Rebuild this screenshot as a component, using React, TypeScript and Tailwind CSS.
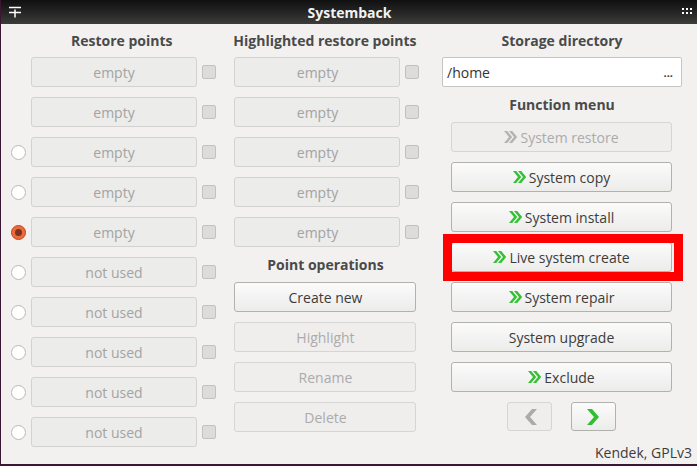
const font = { fontFamily: '"Open Sans", "Noto Sans", sans-serif' };

function Arrows({ muted = false }: { muted?: boolean }) {
    const c = muted ? '#b3b3b3' : '#35c135';
    return (
        <svg width="13" height="12" viewBox="0 0 13 12" className="mr-[3px] shrink-0">
            <path d="M0 0h3.2l5 6-5 6H0l5-6z" fill={c} />
            <path d="M5 0h3.2l5 6-5 6H5l5-6z" fill={c} />
        </svg>
    );
}

function Field({ text }: { text: string }) {
    return (
        <div className="w-[166px] h-[30px] rounded-[3px] border border-[#d3d2d0] bg-[#ececeb] flex items-center justify-center text-[14px] text-[#a3a3a3]">
            {text}
        </div>
    );
}

function Check() {
    return <div className="w-[14px] h-[14px] rounded-[2px] border border-[#c2c1bf] bg-[#dcdcdb]" />;
}

function Radio({ on = false }: { on?: boolean }) {
    if (on) {
        return (
            <div className="w-[15px] h-[15px] rounded-full border border-[#c0461a] bg-[#ed6a3c] flex items-center justify-center">
                <div className="w-[7px] h-[7px] rounded-full bg-[#7a3320]" />
            </div>
        );
    }
    return <div className="w-[15px] h-[15px] rounded-full border border-[#b9b8b6] bg-white" />;
}

function Btn({ label, w, arrows, disabled }: { label: string; w: string; arrows?: boolean; disabled?: boolean }) {
    return (
        <div
            className={`${w} h-[30px] rounded-[3px] border flex items-center justify-center text-[14px] ${disabled
                ? 'border-[#d6d5d3] bg-[#efeeed] text-[#ababab]'
                : 'border-[#b3b1ae] bg-gradient-to-b from-[#fbfbfb] to-[#ececeb] text-[#3c3c3c]'
                }`}
        >
            {arrows && <Arrows muted={disabled} />}
            {label}
        </div>
    );
}

const restoreRows = ['empty', 'empty', 'empty', 'empty', 'empty', 'not used', 'not used', 'not used', 'not used', 'not used'];

export default function App() {
    return (
        <div style={font} className="w-[697px] h-[466px] bg-[#f2f1f0] flex flex-col border-l border-b-2 border-[#3a1633] overflow-hidden">
            {/* title bar */}
            <div className="h-[24px] shrink-0 bg-gradient-to-b from-[#101010] to-[#3c3c3b] flex items-center justify-between pl-[7px] pr-[4px]">
                <svg width="14" height="12" viewBox="0 0 14 12">
                    <path d="M1 1.5h12M1 6.5h12M7 3.5v8" stroke="#ffffff" strokeWidth="1.5" />
                </svg>
                <span className="text-[14px] font-bold text-[#f2f2f2] -ml-[4px]">Systemback</span>
                <svg width="12" height="10" viewBox="0 0 12 10">
                    {[0, 4, 8].map((x) =>
                        [1, 5].map((y) => <rect key={`${x}-${y}`} x={x + 1} y={y} width="2" height="2" fill="#ffffff" />)
                    )}
                </svg>
            </div>

            <div className="flex flex-1">
                {/* restore points */}
                <div className="w-[219px] flex flex-col">
                    <div className="h-[33px] flex items-center justify-end pr-[47px] text-[14px] font-bold text-[#4a4a4a]">
                        Restore points
                    </div>
                    <div className="flex flex-col gap-[10px]">
                        {restoreRows.map((t, i) => (
                            <div key={i} className="h-[30px] flex items-center">
                                <div className="w-[30px] flex justify-center pl-[7px] pr-[3px]">
                                    {i >= 2 && <Radio on={i === 4} />}
                                </div>
                                <Field text={t} />
                                <div className="ml-[5px]"><Check /></div>
                            </div>
                        ))}
                    </div>
                </div>

                {/* highlighted */}
                <div className="w-[212px] flex flex-col pl-[15px]">
                    <div className="h-[33px] w-[185px] flex items-center justify-center text-[14px] font-bold text-[#4a4a4a] -ml-[2px]">
                        <span className="whitespace-nowrap">Highlighted restore points</span>
                    </div>
                    <div className="flex flex-col gap-[10px]">
                        {[0, 1, 2, 3, 4].map((i) => (
                            <div key={i} className="h-[30px] flex items-center">
                                <Field text="empty" />
                                <div className="ml-[5px]"><Check /></div>
                            </div>
                        ))}
                    </div>
                    <div className="h-[35px] w-[182px] flex items-center justify-center text-[14px] font-bold text-[#4a4a4a]">
                        Point operations
                    </div>
                    <div className="flex flex-col gap-[10px]">
                        <Btn label="Create new" w="w-[182px]" />
                        <Btn label="Highlight" w="w-[182px]" disabled />
                        <Btn label="Rename" w="w-[182px]" disabled />
                        <Btn label="Delete" w="w-[182px]" disabled />
                    </div>
                </div>

                {/* storage + functions */}
                <div className="flex-1 flex flex-col pl-[11px] pr-[15px]">
                    <div className="h-[33px] flex items-center justify-center text-[14px] font-bold text-[#4a4a4a]">
                        Storage directory
                    </div>
                    <div className="h-[30px] w-[240px] rounded-[2px] border border-[#c6c5c3] bg-white flex items-center justify-between pl-[4px] pr-[8px] text-[14px] text-[#333333]">
                        <span>/home</span>
                        <span className="text-[11px] font-bold mt-[2px]">...</span>
                    </div>
                    <div className="h-[35px] flex items-center justify-center text-[14px] font-bold text-[#4a4a4a]">
                        Function menu
                    </div>
                    <div className="flex flex-col gap-[10px] pl-[9px]">
                        <Btn label="System restore" w="w-[221px]" arrows disabled />
                        <Btn label="System copy" w="w-[221px]" arrows />
                        <Btn label="System install" w="w-[221px]" arrows />
                        <div className="relative">
                            <Btn label="Live system create" w="w-[221px]" arrows />
                            <div className="absolute left-[-8px] top-[-8px] w-[240px] h-[47px] border-[9px] border-[#ff0000]" />
                        </div>
                        <Btn label="System repair" w="w-[221px]" arrows />
                        <Btn label="System upgrade" w="w-[221px]" />
                        <Btn label="Exclude" w="w-[221px]" arrows />
                    </div>
                    <div className="flex justify-center gap-[19px] mt-[10px] pl-[9px] w-[230px]">
                        <div className="w-[45px] h-[29px] rounded-[3px] border border-[#d6d5d3] bg-[#efeeed] flex items-center justify-center">
                            <svg width="14" height="16" viewBox="0 0 14 16">
                                <path d="M9 0h5L7 8l7 8H9L2 8z" fill="#aaaaaa" />
                            </svg>
                        </div>
                        <div className="w-[45px] h-[29px] rounded-[3px] border border-[#b3b1ae] bg-gradient-to-b from-[#fbfbfb] to-[#ececeb] flex items-center justify-center">
                            <svg width="14" height="16" viewBox="0 0 14 16">
                                <path d="M0 0h5l7 8-7 8H0l7-8z" fill="#2fbf2f" />
                            </svg>
                        </div>
                    </div>
                    <div className="flex-1 flex items-end justify-end pb-[1px] -mr-[10px] text-[14px] text-[#3c3c3c]">
                        Kendek, GPLv3
                    </div>
                </div>
            </div>
        </div>
    );
}
